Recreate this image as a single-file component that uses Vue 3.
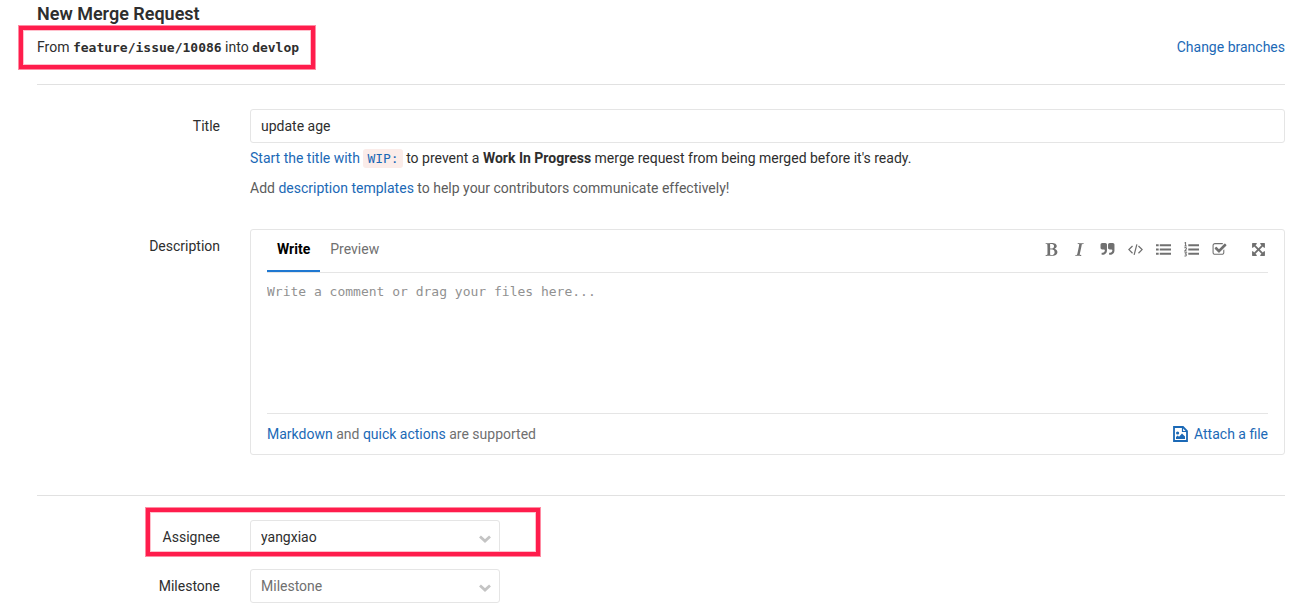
<script setup>
import { ref } from 'vue'

const title = ref('update age')
const description = ref('')
const assignee = ref('yangxiao')
const milestone = ref('')

const tools = [
  { name: 'Bold', d: 'M747 1521q74 32 140 32 376 0 376-335 0-114-41-180-27-44-61.5-74t-67.5-46.5-80.5-25-84-10.5-94.5-2q-73 0-101 10 0 53-.5 159t-.5 158q0 8-1 67.5t-.5 96.5 4.5 83.5 12 66.5zm-14-746q42 7 109 7 82 0 143-13t110-44.5 74.5-89.5 25.5-142q0-70-29-122.5t-79-82-108-43.5-124-14q-50 0-130 13 0 50 4 151t4 152q0 27-.5 80t-.5 79q0 46 1 69zm-541 889l2-94q15-4 85-16t106-27q7-12 12.5-27t8.5-33.5 5.5-32.5 3-37.5.5-34v-65.5q0-982-22-1025-4-8-22-14.5t-44.5-11-49.5-7-48.5-4.5-30.5-3l-4-83q98-2 340-11.5t373-9.5q23 0 68.5.5t67.5.5q70 0 136.5 13t128.5 42 108 71 74 104.5 28 137.5q0 52-16.5 95.5t-39 72-64.5 57.5-73 45-84 40q154 35 256.5 134t102.5 248q0 100-35 179.5t-93.5 130.5-138 85.5-163.5 48.5-176 14q-44 0-132-3t-132-3q-106 0-307 11t-231 12z' },
  { name: 'Italic', d: 'M384 1662l17-85q6-2 81.5-21.5t111.5-37.5q28-35 41-101 1-7 62-289t114-543.5 52-296.5v-25q-24-13-54.5-18.5t-69.5-8-58-5.5l19-103q33 2 120 6.5t149.5 7 120.5 2.5q48 0 98.5-2.5t121-7 98.5-6.5q-5 39-19 89-30 10-101.5 28.5t-108.5 33.5q-8 19-14 42.5t-9 40-7.5 45.5-6.5 42q-27 148-87.5 419.5t-77.5 355.5q-2 9-13 58t-20 90-16 83.5-6 57.5l1 18q17 4 185 31-3 44-16 99-11 0-32.5 1.5t-32.5 1.5q-29 0-87-10t-86-10q-138-2-206-2-51 0-143 9t-121 11z' },
  { name: 'Quote', d: 'M832 320v704q0 104-40.5 198.5t-109.5 163.5-163.5 109.5-198.5 40.5h-64q-26 0-45-19t-19-45v-128q0-26 19-45t45-19h64q106 0 181-75t75-181v-32q0-40-28-68t-68-28h-224q-80 0-136-56t-56-136v-384q0-80 56-136t136-56h384q80 0 136 56t56 136zm896 0v704q0 104-40.5 198.5t-109.5 163.5-163.5 109.5-198.5 40.5h-64q-26 0-45-19t-19-45v-128q0-26 19-45t45-19h64q106 0 181-75t75-181v-32q0-40-28-68t-68-28h-224q-80 0-136-56t-56-136v-384q0-80 56-136t136-56h384q80 0 136 56t56 136z' },
  { name: 'Code', line: 'M540 480L110 910l430 430M1252 480l430 430-430 430M1060 290L732 1530', width: 150 },
  { name: 'Bulleted list', d: 'M0 256h320v256H0zM0 768h320v256H0zM0 1280h320v256H0zM448 256h1344v256H448zM448 768h1344v256H448zM448 1280h1344v256H448z' },
  { name: 'Numbered list', d: 'M512 256h1280v256H512zM512 768h1280v256H512zM512 1280h1280v256H512z', line: 'M60 130L190 60V480M50 480H330M60 740Q180 610 270 710T70 1080H330M60 1280H290L180 1440Q310 1470 270 1600T50 1660', width: 120 },
  { name: 'Task list', d: 'M1472 930v318q0 119-84.5 203.5t-203.5 84.5h-832q-119 0-203.5-84.5t-84.5-203.5v-832q0-119 84.5-203.5t203.5-84.5h832q63 0 117 25 15 7 18 23 3 17-9 29l-49 49q-10 10-23 10-3 0-9-2-23-6-45-6h-832q-66 0-113 47t-47 113v832q0 66 47 113t113 47h832q66 0 113-47t47-113v-254q0-13 9-22l64-64q10-10 23-10 6 0 12 3 20 8 20 29zm231-489l-814 814q-24 24-57 24t-57-24l-430-430q-24-24-24-57t24-57l110-110q24-24 57-24t57 24l263 263 647-647q24-24 57-24t57 24l110 110q24 24 24 57t-24 57z' },
  { name: 'Full screen', apart: true, d: 'M1411 541l-355 355 355 355 144-144q29-31 70-14 39 17 39 59v448q0 26-19 45t-45 19h-448q-42 0-59-40-17-39 14-69l144-144-355-355-355 355 144 144q31 30 14 69-17 40-59 40h-448q-26 0-45-19t-19-45v-448q0-42 40-59 39-17 69 14l144 144 355-355-355-355-144 144q-19 19-45 19-12 0-24-5-40-17-40-59v-448q0-26 19-45t45-19h448q42 0 59 40 17 39-14 69l-144 144 355 355 355-355-144-144q-31-30-14-69 17-40 59-40h448q26 0 45 19t19 45v448q0 42-39 59-13 5-25 5-26 0-45-19z' },
]
</script>

<template>
  <main class="page">
    <h1>New Merge Request</h1>
    <div class="branches">
      <p class="marked">
        From <code class="ref">feature/issue/10086</code> into <code class="ref">devlop</code>
        <span class="mark mark-branches"></span>
      </p>
      <a href="#">Change branches</a>
    </div>
    <hr>
    <form @submit.prevent>
      <div class="row">
        <label for="mr-title">Title</label>
        <div>
          <input id="mr-title" v-model="title" class="field" type="text">
          <p class="help"><a href="#">Start the title with <code class="wip">WIP:</code></a> to prevent a <strong>Work In Progress</strong> merge request from being merged before it's ready.</p>
          <p class="help muted">Add <a href="#">description templates</a> to help your contributors communicate effectively!</p>
        </div>
      </div>
      <div class="row row-description">
        <label for="mr-description">Description</label>
        <div class="editor">
          <div class="editor-head">
            <button type="button" class="tab active">Write</button>
            <button type="button" class="tab">Preview</button>
            <div class="tools">
              <button v-for="t in tools" :key="t.name" type="button" class="tool" :class="{ apart: t.apart }" :aria-label="t.name">
                <svg viewBox="0 0 1792 1792" width="15" height="15">
                  <path v-if="t.d" :d="t.d" fill="currentColor" />
                  <path v-if="t.line" :d="t.line" fill="none" stroke="currentColor" :stroke-width="t.width" />
                </svg>
              </button>
            </div>
          </div>
          <textarea id="mr-description" v-model="description" placeholder="Write a comment or drag your files here..."></textarea>
          <div class="editor-foot">
            <span><a href="#">Markdown</a> and <a href="#">quick actions</a> are supported</span>
            <button type="button" class="attach">
              <svg viewBox="0 0 15 16" width="15" height="16">
                <path d="M1 1h9l4 4v10H1z" fill="none" stroke="currentColor" stroke-width="1.8" />
                <path d="M9.5 1v4.5H14" fill="none" stroke="currentColor" stroke-width="1.2" />
                <circle cx="4.6" cy="7" r="1.6" fill="currentColor" />
                <path d="M3 13v-2l1.7-1.5L6 10.7l3-3.2 3 3V13z" fill="currentColor" />
              </svg>
              Attach a file
            </button>
          </div>
        </div>
      </div>
      <hr class="section">
      <div class="row marked">
        <label for="mr-assignee">Assignee</label>
        <div class="picker">
          <select id="mr-assignee" v-model="assignee" class="field">
            <option value="yangxiao">yangxiao</option>
          </select>
          <svg class="chevron" viewBox="0 0 12 8" width="12" height="8"><path d="M1 1.5l5 4.500 5-4.500" fill="none" stroke="currentColor" stroke-width="2.800" /></svg>
        </div>
        <span class="mark mark-assignee"></span>
      </div>
      <div class="row row-milestone">
        <label for="mr-milestone">Milestone</label>
        <div class="picker">
          <select id="mr-milestone" v-model="milestone" class="field unset">
            <option value="">Milestone</option>
          </select>
          <svg class="chevron" viewBox="0 0 12 8" width="12" height="8"><path d="M1 1.5l5 4.500 5-4.500" fill="none" stroke="currentColor" stroke-width="2.800" /></svg>
        </div>
      </div>
    </form>
  </main>
</template>

<style>
body {
  margin: 0;
  background: #fff;
}
</style>

<style scoped>
* {
  box-sizing: border-box;
}
.page {
  padding: 4px 24px 0 37px;
  color: #2e2e2e;
  font: 14px/20px Roboto, "Noto Sans", sans-serif;
}
h1 {
  margin: 0 0 6px;
  font-size: 18px;
  line-height: 20px;
  font-weight: 600;
}
p {
  margin: 0;
}
a {
  color: #1b69b6;
  text-decoration: none;
}
code {
  font-family: "DejaVu Sans Mono", monospace;
  font-size: 13px;
  line-height: 15px;
}
.branches {
  display: flex;
  align-items: center;
  justify-content: space-between;
  height: 34px;
}
.ref {
  font-weight: 700;
}
hr {
  height: 1px;
  margin: 20px 0 24px;
  border: 0;
  background: #e1e1e1;
}
hr.section {
  margin-top: 40px;
}
.row {
  display: grid;
  grid-template-columns: minmax(0, 2fr) minmax(0, 10fr);
  margin: 0 -15px;
}
.row > label {
  padding: 7px 15px;
  text-align: right;
}
.row > div {
  margin: 0 15px;
}
.row-description {
  margin-top: 31px;
}
.row-milestone {
  margin-top: 15px;
}
.field {
  display: block;
  width: 100%;
  height: 34px;
  padding: 6px 10px;
  border: 1px solid #e5e5e5;
  border-radius: 3px;
  background: #fff;
  color: #2e2e2e;
  font: inherit;
  appearance: none;
}
.help {
  margin-top: 5px;
}
.muted {
  margin-top: 10px;
  color: #5c5c5c;
}
.wip {
  padding: 2px 4px;
  border-radius: 3px;
  background: #fbece9;
}
.editor {
  padding: 0 16px;
  border: 1px solid #e5e5e5;
  border-radius: 3px;
}
.editor-head {
  display: flex;
  height: 43px;
  border-bottom: 1px solid #e5e5e5;
}
button {
  padding: 0;
  border: 0;
  background: none;
  font: inherit;
  cursor: pointer;
}
.tab {
  height: 42px;
  padding: 0 10px 2px;
  border-bottom: 2px solid transparent;
  color: #707070;
}
.tab.active {
  border-color: #1f78d1;
  color: #000;
  font-weight: 700;
}
.tools {
  display: flex;
  align-items: center;
  gap: 13px;
  height: 39px;
  margin-left: auto;
  padding-right: 2px;
}
.tool {
  display: flex;
  color: #707070;
}
.tool.apart {
  margin-left: 11px;
}
textarea {
  display: block;
  width: 100%;
  height: 140px;
  padding: 10px 0;
  border: 0;
  outline: 0;
  resize: none;
  background: none;
  color: #2e2e2e;
  font: 13px/18px "DejaVu Sans Mono", monospace;
}
textarea::placeholder {
  color: #919191;
}
.editor-foot {
  display: flex;
  align-items: center;
  justify-content: space-between;
  height: 41px;
  border-top: 1px solid #e5e5e5;
  color: #707070;
}
.attach {
  display: flex;
  align-items: center;
  gap: 6px;
  color: #1b69b6;
}
.row > .picker {
  position: relative;
  width: 250px;
}
.unset {
  color: #707070;
}
.chevron {
  position: absolute;
  top: 15px;
  right: 9px;
  color: #c4c4c4;
  pointer-events: none;
}
.marked {
  position: relative;
}
.mark {
  position: absolute;
  border: 4px solid #ff1d4c;
  box-shadow: 0 0 0 1px #ff8ca3, inset 0 0 0 1px #ffc0cc;
  pointer-events: none;
}
.mark-branches {
  inset: -11px -16px -12px -18px;
}
.mark-assignee {
  top: -12px;
  bottom: -2px;
  left: 124px;
  width: 394px;
}
</style>
